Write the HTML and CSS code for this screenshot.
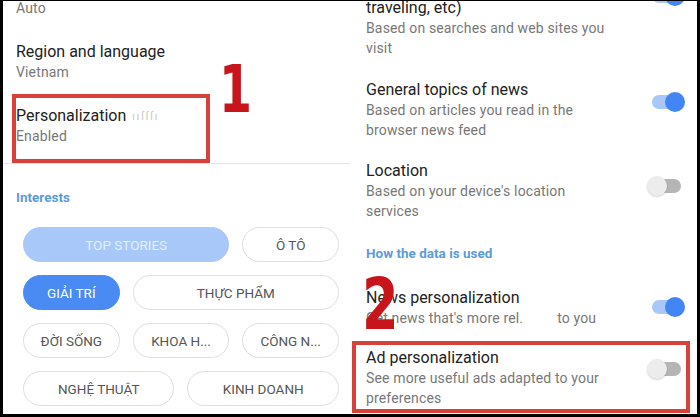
FILE: index.html
```html
<!DOCTYPE html>
<html lang="en">
<head>
<meta charset="utf-8">
<title>Personalization settings</title>
<link rel="stylesheet" href="styles.css">
</head>
<body>
<div class="frame">
  <div class="screen">
    <section class="panel panel-left">
      <div class="item item-cut">
        <div class="sub">Auto</div>
      </div>
      <div class="item item-left">
        <div class="title">Region and language</div>
        <div class="sub">Vietnam</div>
      </div>
      <div class="item item-left">
        <div class="title">Personalization<span class="ghost">ııſſſı</span></div>
        <div class="sub">Enabled</div>
      </div>
      <div class="divider"></div>
      <div class="section-label label-interests">Interests</div>
      <div class="chips">
        <div class="chip chip-soft span-4">TOP STORIES</div>
        <div class="chip span-2">Ô TÔ</div>
        <div class="chip chip-on span-2">GIẢI TRÍ</div>
        <div class="chip span-4">THỰC PHẨM</div>
        <div class="chip span-2">ĐỜI SỐNG</div>
        <div class="chip span-2">KHOA H...</div>
        <div class="chip span-2">CÔNG N...</div>
        <div class="chip span-3">NGHỆ THUẬT</div>
        <div class="chip span-3">KINH DOANH</div>
      </div>
    </section>

    <section class="panel panel-right">
      <div class="row row-first">
        <div class="texts">
          <div class="title">traveling, etc)</div>
          <div class="sub">Based on searches and web sites you<br>visit</div>
        </div>
        <div class="toggle on"><span class="track"></span><span class="knob"></span></div>
      </div>
      <div class="row row-general">
        <div class="texts">
          <div class="title">General topics of news</div>
          <div class="sub">Based on articles you read in the<br>browser news feed</div>
        </div>
        <div class="toggle on"><span class="track"></span><span class="knob"></span></div>
      </div>
      <div class="row row-location">
        <div class="texts">
          <div class="title">Location</div>
          <div class="sub">Based on your device's location<br>services</div>
        </div>
        <div class="toggle off"><span class="track"></span><span class="knob"></span></div>
      </div>
      <div class="section-label label-data">How the data is used</div>
      <div class="row row-news">
        <div class="texts">
          <div class="title">News personalization</div>
          <div class="sub">Get news that's more rel.<span class="blur-gap"></span>to you</div>
        </div>
        <div class="toggle on"><span class="track"></span><span class="knob"></span></div>
      </div>
      <div class="row row-ad">
        <div class="texts">
          <div class="title">Ad personalization</div>
          <div class="sub">See more useful ads adapted to your<br>preferences</div>
        </div>
        <div class="toggle off"><span class="track"></span><span class="knob"></span></div>
      </div>
    </section>

    <div class="mark-box box-one"></div>
    <div class="mark-box box-two"></div>
    <div class="mark-num num-one">1</div>
    <div class="mark-num num-two">2</div>
  </div>
</div>
</body>
</html>
```

FILE: styles.css
```css
* { box-sizing: border-box; }

html, body {
  margin: 0;
  padding: 0;
  background: #000;
}

body {
  font-family: Roboto, "Noto Sans", "Liberation Sans", sans-serif;
  width: 700px;
  height: 417px;
  overflow: hidden;
}

.frame {
  width: 700px;
  height: 417px;
  padding: 1px 3px 3px 3px;
}

.screen {
  position: relative;
  width: 694px;
  height: 413px;
  background: #fff;
  overflow: hidden;
  display: grid;
  grid-template-columns: 347px 347px;
}

.panel {
  overflow: hidden;
  display: flex;
  flex-direction: column;
}

.panel-left {
  padding-left: 13px;
}

.panel-right {
  padding-left: 16px;
  padding-right: 12px;
}

.title {
  font-size: 16px;
  line-height: 20px;
  height: 20px;
  color: #222;
}

.sub {
  font-size: 14px;
  line-height: 20px;
  color: #777;
  letter-spacing: 0.15px;
}

.ghost {
  margin-left: 6px;
  font-size: 10px;
  line-height: 0;
  color: #c4c4c4;
  letter-spacing: 2px;
  vertical-align: 1px;
}

.item-cut {
  margin-top: -3px;
}

.item-left {
  margin-top: 24px;
}

.divider {
  height: 1px;
  background: #e6e6e6;
  margin: 17px 0 0 -13px;
}

.section-label {
  font-size: 13.5px;
  line-height: 20px;
  font-weight: 700;
  color: #5d9ad9;
}

.label-interests {
  margin-top: 23px;
}

.chips {
  margin: 20px 0 0 7px;
  width: 316px;
  display: grid;
  grid-template-columns: repeat(6, 1fr);
  column-gap: 13px;
  row-gap: 13px;
}

.chip {
  height: 35px;
  border: 1.5px solid #dedede;
  border-radius: 18px;
  display: flex;
  align-items: center;
  justify-content: center;
  font-size: 13.5px;
  color: #555;
  white-space: nowrap;
}

.span-2 { grid-column: span 2; }
.span-3 { grid-column: span 3; }
.span-4 { grid-column: span 4; }

.chip-soft {
  background: #a8c8fa;
  border-color: #a8c8fa;
  color: #e4eefe;
}

.chip-on {
  background: #4a8af3;
  border-color: #4a8af3;
  color: #fff;
}

.row {
  display: flex;
  justify-content: space-between;
  align-items: flex-start;
}

.row-first { margin-top: -3px; }
.row-general { margin-top: 22px; }
.row-location { margin-top: 21px; }
.label-data { margin-top: 22px; }
.row-news { margin-top: 25px; }
.row-ad { margin-top: 20px; }

.toggle {
  position: relative;
  flex: none;
  width: 38px;
  height: 20px;
  margin-top: 12px;
}

.row-first .toggle { margin-top: -12px; }
.row-news .toggle { margin-top: 9px; }
.row-ad .toggle { margin-top: 11px; }
.row-location .toggle { margin-top: 15px; }

.track {
  position: absolute;
  left: 5px;
  right: 4px;
  top: 3px;
  height: 14px;
  border-radius: 7px;
  background: #a9c7f8;
}

.knob {
  position: absolute;
  top: 0;
  width: 20px;
  height: 20px;
  border-radius: 50%;
}

.toggle.on .knob {
  right: 0;
  background: #4285f4;
}

.toggle.off .track {
  background: #b5b5b5;
}

.toggle.off .knob {
  left: 0;
  background: #ececec;
  box-shadow: 0 1px 2px rgba(0,0,0,0.18);
}

.blur-gap {
  display: inline-block;
  width: 34px;
}

.mark-box {
  position: absolute;
  border: 4px solid #d8403a;
}

.box-one {
  left: 9px;
  top: 93px;
  width: 198px;
  height: 69px;
}

.box-two {
  left: 349px;
  top: 340px;
  width: 338px;
  height: 72px;
}

.mark-num {
  position: absolute;
  font-family: "DejaVu Sans", "Liberation Sans", sans-serif;
  font-weight: 700;
  line-height: 1;
  color: #c8141b;
  transform-origin: left top;
}

.num-one {
  left: 216px;
  top: 56px;
  font-size: 66px;
  transform: scaleX(0.72);
}

.num-two {
  left: 359px;
  top: 268px;
  font-size: 71px;
  transform: scaleX(0.74);
}
```
